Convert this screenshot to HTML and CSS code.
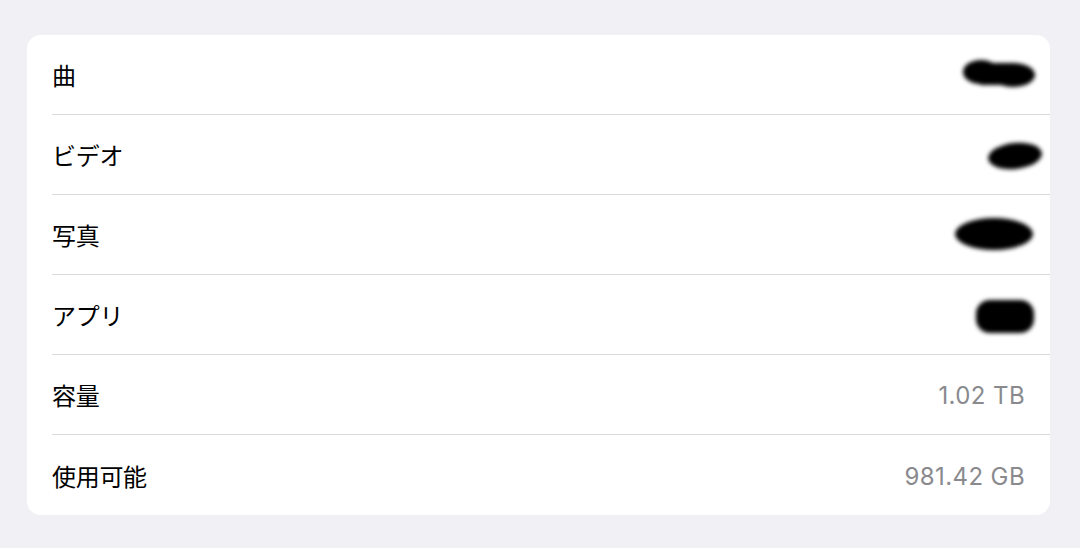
FILE: index.html
```html
<!DOCTYPE html>
<html lang="ja">
<head>
<meta charset="utf-8">
<link rel="stylesheet" href="styles.css">
</head>
<body>
<svg width="0" height="0" class="defs">
  <filter id="blur" x="-20%" y="-50%" width="140%" height="200%"><feGaussianBlur stdDeviation="2"/></filter>
</svg>
<div class="card">
  <div class="row">
    <span class="label">曲</span>
    <svg class="blob" width="100" height="50" viewBox="0 0 100 50"><g filter="url(#blur)" fill="#000"><ellipse cx="31" cy="22" rx="18" ry="12"/><ellipse cx="63" cy="25" rx="22" ry="12"/><rect x="30" y="13" width="34" height="22"/></g></svg>
  </div>
  <div class="row">
    <span class="label">ビデオ</span>
    <svg class="blob" width="100" height="50" viewBox="0 0 100 50"><g filter="url(#blur)" fill="#000"><ellipse cx="65" cy="26" rx="27" ry="13" transform="rotate(-6 65 26)"/></g></svg>
  </div>
  <div class="row">
    <span class="label">写真</span>
    <svg class="blob" width="100" height="50" viewBox="0 0 100 50"><g filter="url(#blur)" fill="#000"><ellipse cx="44" cy="24" rx="39" ry="16"/></g></svg>
  </div>
  <div class="row">
    <span class="label">アプリ</span>
    <svg class="blob" width="100" height="50" viewBox="0 0 100 50"><g filter="url(#blur)" fill="#000"><rect x="26" y="10" width="58" height="33" rx="14"/></g></svg>
  </div>
  <div class="row">
    <span class="label">容量</span>
    <span class="value">1.02 TB</span>
  </div>
  <div class="row">
    <span class="label">使用可能</span>
    <span class="value">981.42 GB</span>
  </div>
</div>
</body>
</html>
```
FILE: styles.css
```css
html, body {
  margin: 0;
  background: #f0f0f5;
}
body {
  padding: 35px 30px 0 27px;
  font-family: "Inter", "Noto Sans CJK JP", sans-serif;
}
.defs {
  position: absolute;
}
.card {
  background: #ffffff;
  border-radius: 14px;
  width: 1023px;
  overflow: hidden;
}
.row {
  height: 80px;
  box-sizing: border-box;
  margin-left: 25px;
  padding-right: 25px;
  border-bottom: 1px solid #d9d9dd;
  display: flex;
  align-items: center;
  justify-content: space-between;
}
.row:last-child {
  border-bottom: none;
}
.label {
  font-size: 24px;
  color: #000;
  letter-spacing: -0.3px;
}
.value {
  font-size: 24px;
  letter-spacing: 0.4px;
  color: #8a8a8e;
  padding-top: 2px;
}
.blob {
  margin-right: -25px;
  display: block;
}
```
